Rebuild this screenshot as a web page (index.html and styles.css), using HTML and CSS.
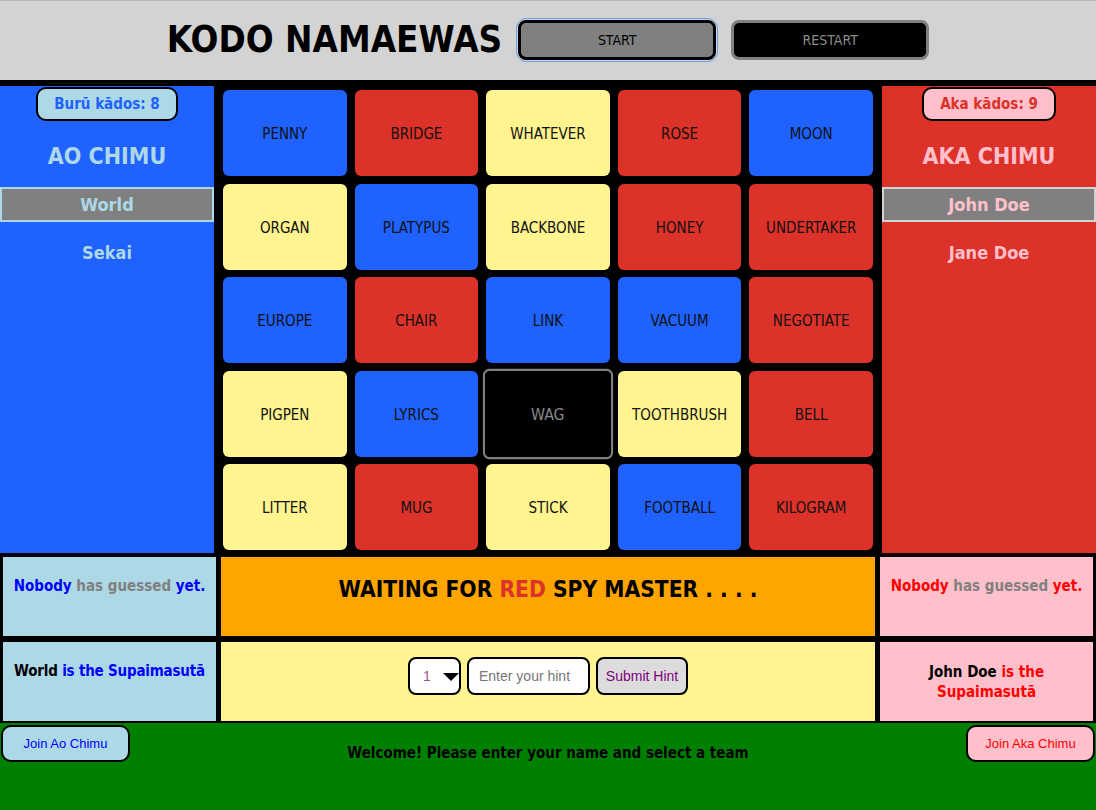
FILE: index.html
```html
<!DOCTYPE html>
<html>
<head>
<meta charset="utf-8">
<title>Kodo Namaewas</title>
<link rel="stylesheet" href="styles.css">
</head>
<body>
<header class="header">
  <h1 class="title">KODO NAMAEWAS</h1>
  <button class="btn-start">START</button>
  <button class="btn-restart">RESTART</button>
</header>

<main class="board">
  <section class="team team-blue">
    <div class="badge badge-blue">Burū kādos: 8</div>
    <h2 class="team-name">AO CHIMU</h2>
    <div class="member member-master">World</div>
    <div class="member">Sekai</div>
  </section>

  <section class="grid">
    <div class="card c-blue">PENNY</div>
    <div class="card c-red">BRIDGE</div>
    <div class="card c-yellow">WHATEVER</div>
    <div class="card c-red">ROSE</div>
    <div class="card c-blue">MOON</div>

    <div class="card c-yellow">ORGAN</div>
    <div class="card c-blue">PLATYPUS</div>
    <div class="card c-yellow">BACKBONE</div>
    <div class="card c-red">HONEY</div>
    <div class="card c-red">UNDERTAKER</div>

    <div class="card c-blue">EUROPE</div>
    <div class="card c-red">CHAIR</div>
    <div class="card c-blue">LINK</div>
    <div class="card c-blue">VACUUM</div>
    <div class="card c-red">NEGOTIATE</div>

    <div class="card c-yellow">PIGPEN</div>
    <div class="card c-blue">LYRICS</div>
    <div class="card c-black">WAG</div>
    <div class="card c-yellow">TOOTHBRUSH</div>
    <div class="card c-red">BELL</div>

    <div class="card c-yellow">LITTER</div>
    <div class="card c-red">MUG</div>
    <div class="card c-yellow">STICK</div>
    <div class="card c-blue">FOOTBALL</div>
    <div class="card c-red">KILOGRAM</div>
  </section>

  <section class="team team-red">
    <div class="badge badge-red">Aka kādos: 9</div>
    <h2 class="team-name">AKA CHIMU</h2>
    <div class="member member-master">John Doe</div>
    <div class="member">Jane Doe</div>
  </section>
</main>

<section class="status">
  <div class="cell cell-blue"><span class="t-blue">Nobody</span> <span class="t-gray">has guessed</span> <span class="t-blue">yet.</span></div>
  <div class="cell cell-orange">WAITING FOR <span class="t-redteam">RED</span> SPY MASTER . . . .</div>
  <div class="cell cell-pink"><span class="t-red">Nobody</span> <span class="t-gray">has guessed</span> <span class="t-red">yet.</span></div>

  <div class="cell cell-blue cell-master-blue">World <span class="t-blue">is the Supaimasutā</span></div>
  <div class="cell cell-yellow">
    <form class="hint-form">
      <div class="sel-wrap">
        <select class="hint-num"><option>1</option></select>
      </div>
      <input class="hint-input" type="text" placeholder="Enter your hint">
      <button type="button" class="hint-submit">Submit Hint</button>
    </form>
  </div>
  <div class="cell cell-pink cell-master-red">John Doe <span class="t-red">is the Supaimasutā</span></div>
</section>

<footer class="footer">
  <button class="join join-blue">Join Ao Chimu</button>
  <p class="welcome">Welcome! Please enter your name and select a team</p>
  <button class="join join-red">Join Aka Chimu</button>
</footer>
</body>
</html>
```

FILE: styles.css
```css
* { box-sizing: border-box; }

body {
  margin: 0;
  font-family: "DejaVu Sans Condensed", "DejaVu Sans", sans-serif;
  background: #ffffff;
}

.header {
  height: 80px;
  background: #d3d3d3;
  border-top: 1px solid #b8b8b8;
  display: flex;
  align-items: center;
  justify-content: center;
  gap: 15px;
}

.title {
  margin: 0 1px 2px 0;
  font-size: 36.5px;
  font-weight: bold;
  color: #000;
}

.btn-start,
.btn-restart {
  width: 198px;
  height: 40px;
  border-radius: 8px;
  font-family: "DejaVu Sans Condensed", sans-serif;
  font-size: 14px;
  margin-bottom: 2px;
}

.btn-start {
  background: #808080;
  border: 3px solid #000;
  color: #000;
  outline: 1px solid #6f9fe6;
  outline-offset: 1px;
}

.btn-restart {
  background: #000;
  border: 3px solid #808080;
  color: #8a8a8a;
}

.board {
  display: flex;
  background: #000;
  padding-top: 6px;
}

.team {
  width: 214px;
  height: 467px;
  padding-top: 1px;
  text-align: center;
  font-weight: bold;
}

.team-blue { background: #1f62ff; color: #add8e6; }
.team-red { background: #dc3229; color: #ffc0cb; }

.badge {
  display: inline-block;
  height: 34px;
  line-height: 30px;
  padding: 0 16px;
  border: 2px solid #000;
  border-radius: 10px;
  font-size: 15px;
}

.badge-blue { background: #add8e6; color: #1f62ff; }
.badge-red { background: #ffc0cb; color: #dc3229; }

.team-name {
  margin: 22px 0 18px;
  font-size: 23px;
  line-height: 26px;
}

.member {
  font-size: 18px;
  line-height: 22px;
  margin-top: 20px;
}

.member-master {
  margin-top: 0;
  height: 35px;
  line-height: 31px;
  background: #808080;
}

.team-blue .member-master { border: 2px solid #add8e6; }
.team-red .member-master { border: 2px solid #d3d3d3; }

.grid {
  flex: 1;
  display: grid;
  grid-template-columns: repeat(5, 1fr);
  grid-template-rows: repeat(5, 86px);
  gap: 7.5px 8px;
  padding: 4px 9px 3px;
}

.card {
  display: flex;
  align-items: center;
  justify-content: center;
  border-radius: 6px;
  font-size: 15px;
  color: #111;
  padding-top: 2px;
}

.c-blue { background: #1f62ff; }
.c-red { background: #dc3229; }
.c-yellow { background: #fff48f; }
.c-black {
  background: #000;
  border: 2px solid #808080;
  color: #8a8a8a;
  transform: scale(1.05);
}

.status {
  display: grid;
  grid-template-columns: 213px 1fr 213px;
  grid-template-rows: 79px 79px;
  gap: 6px 5px;
  padding: 4px 3px 2px;
  background: #000;
}

.cell {
  text-align: center;
  font-weight: bold;
  font-size: 15px;
  padding: 20px 8px 0;
  line-height: 19px;
}

.cell-blue { background: #add8e6; color: #000; }
.cell-pink { background: #ffc0cb; color: #000; }
.cell-yellow { background: #fff48f; padding-top: 15px; }
.cell-orange {
  background: #ffa500;
  font-size: 22.6px;
  line-height: 26px;
  padding-top: 19px;
  color: #000;
}

.cell-master-blue {
  padding-left: 0;
  padding-right: 0;
  white-space: nowrap;
  letter-spacing: -0.2px;
}

.cell-master-red {
  padding-left: 14px;
  padding-right: 14px;
  line-height: 20px;
}

.t-blue { color: #0000ff; }
.t-red { color: #ff0000; }
.t-gray { color: #808080; }
.t-redteam { color: #dc3229; }

.hint-form {
  display: flex;
  justify-content: center;
  gap: 6px;
  margin: 0;
  font-family: "Liberation Sans", Arial, sans-serif;
  font-weight: normal;
}

.sel-wrap {
  position: relative;
  width: 53px;
  height: 38px;
}

.sel-wrap::after {
  content: "";
  position: absolute;
  right: 2px;
  top: 16px;
  border-left: 8px solid transparent;
  border-right: 8px solid transparent;
  border-top: 8px solid #000;
  pointer-events: none;
}

.hint-num {
  -webkit-appearance: none;
  appearance: none;
  width: 100%;
  height: 100%;
  border: 2px solid #000;
  border-radius: 8px;
  background: #fff;
  padding: 0 0 0 13px;
  font-family: "Liberation Sans", Arial, sans-serif;
  font-size: 14px;
  color: #9b4f8a;
}

.hint-input {
  width: 123px;
  height: 38px;
  border: 2px solid #000;
  border-radius: 8px;
  background: #fff;
  padding: 0 10px;
  font-family: "Liberation Sans", Arial, sans-serif;
  font-size: 14px;
}

.hint-input::placeholder { color: #777; }

.hint-submit {
  width: 92px;
  height: 38px;
  border: 2px solid #000;
  border-radius: 8px;
  background: #dcdcdc;
  color: #800080;
  font-family: "Liberation Sans", Arial, sans-serif;
  font-size: 14px;
  padding: 0;
}

.footer {
  display: grid;
  grid-template-columns: auto 1fr auto;
  align-items: start;
  background: #008000;
  height: 87px;
  padding: 2px 1px 0;
}

.join {
  width: 129px;
  height: 37px;
  border: 2px solid #000;
  border-radius: 10px;
  font-family: "Liberation Sans", Arial, sans-serif;
  font-size: 13px;
}

.join-blue { background: #add8e6; color: #0000ff; }
.join-red { background: #ffc0cb; color: #ff0000; }

.welcome {
  margin: 0;
  padding-top: 19px;
  text-align: center;
  font-weight: bold;
  font-size: 15px;
  color: #000;
}
```
